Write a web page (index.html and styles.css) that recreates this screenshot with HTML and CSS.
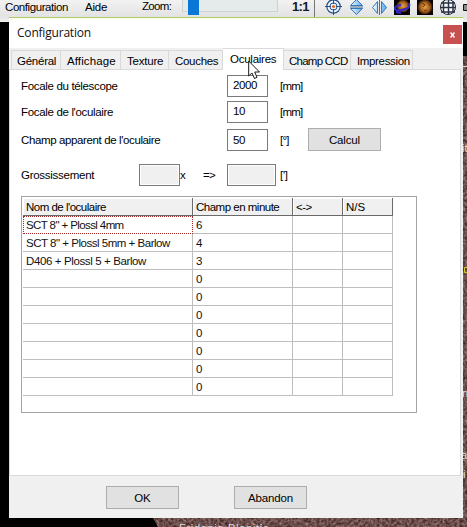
FILE: index.html
```html
<!DOCTYPE html>
<html lang="fr">
<head>
<meta charset="utf-8">
<title>Configuration</title>
<link rel="stylesheet" href="styles.css">
</head>
<body>
<div class="desktop">
  <svg class="surface" width="467" height="527" viewBox="0 0 467 527">
    <defs>
      <filter id="grain" x="0" y="0" width="100%" height="100%" color-interpolation-filters="sRGB">
        <feTurbulence type="fractalNoise" baseFrequency="0.35" numOctaves="3" seed="4"/>
        <feColorMatrix values="0.6 0 0 0 0.12  0.55 0 0 0 0.03  0.55 0 0 0 0.02  0 0 0 0 1"/>
      </filter>
      <clipPath id="planet"><path d="M153 518H467V527H158ZM463 56H467V527H463Z"/></clipPath>
    </defs>
    <rect width="467" height="527" fill="#000"/>
    <g clip-path="url(#planet)"><rect width="467" height="527" filter="url(#grain)"/></g>
    <path d="M463 66.500H467" stroke="#ddd"/>
    <g class="place">
      <text x="179" y="532" textLength="90">Fridonia Planitia</text>
      <text x="462" y="397">n</text><text x="461" y="459">a</text><text x="463" y="478">i</text><text x="462" y="152">it</text>
    </g>
    <path d="M467 267.500H464.500V272.500H467" fill="none" stroke="#d5c51c"/>
  </svg>

  <header class="toolbar">
    <span class="menu m-config">Configuration</span>
    <span class="menu m-help">Aide</span>
    <span class="menu m-zoom">Zoom:</span>
    <div class="track"><div class="thumb"></div></div>
    <span class="ratio">1:1</span>
    <svg class="tools" width="153" height="22" viewBox="314 0 153 22">
      <defs><linearGradient id="sky" x1="0" x2="1"><stop stop-color="#f3fbff"/><stop offset="1" stop-color="#5ba8e8"/></linearGradient>
      <radialGradient id="mars"><stop stop-color="#e5a044"/><stop offset=".65" stop-color="#a35f1c"/><stop offset="1" stop-color="#2a1205"/></radialGradient></defs>
      <path d="M314.500 0V17" stroke="#777"/>
      <g fill="none" stroke="#294f88"><circle cx="333.500" cy="6.500" r="6.700" fill="#edf6ff" stroke-width="1.200"/><circle cx="333.500" cy="6.500" r="3.600"/><path d="M333.500-1V4M333.500 9V15M325 6.500H331M336 6.500H342"/></g>
      <circle cx="333.500" cy="6.500" r="1.600" fill="#e66a22"/>
      <g fill="url(#sky)" stroke="#3478c0"><path d="M350.500 5.500L356.500-.5L362.500 5.500ZM350.500 8.500L356.500 14.500L362.500 8.500Z"/><path d="M377.500 1.500L372.500 7.500L377.500 13.500ZM381.500 1.500L386.500 7.500L381.500 13.500Z"/></g>
      <path d="M350 7H363M379.500 0V15" stroke="#4b718f"/>
      <path d="M394 0H410V15H394ZM417 0H433V15H417Z" fill="#080303"/>
      <circle cx="403" cy="6" r="6.500" fill="url(#mars)"/><circle cx="425" cy="7" r="7.500" fill="url(#mars)"/>
      <path d="M422 3L425 5L423 7M428 3L430 6M424 11L427 10" stroke="#6d3509" fill="none"/>
      <path d="M409 3Q411 8 405 9Q398 12 395 9Q394 6 401 5M396 12L401 13" fill="none" stroke="#3029c4" stroke-width="2"/>
      <circle cx="448" cy="7" r="7.500" fill="#fff" stroke="#202634"/>
      <path d="M443.500 1V13M448.500-1V15M453 1V13M441 3H455M440 7.500H456M441 12H455" stroke="#293345" stroke-width="1.500"/>
      <path d="M467 4.500H463.500V10.500H467" fill="#888" stroke="#111"/>
    </svg>
  </header>

  <main class="dialog">
    <div class="titlebar"><h1>Configuration</h1><button class="close" aria-label="Fermer"><svg width="5" height="6" viewBox="0 0 5 6"><path d="M.5.500L4.500 5.500M4.500.500L.5 5.500" stroke="#fff" stroke-width="1.400"/></svg></button></div>
    <nav class="tabs">
      <span class="tab t1">Général</span><span class="tab t2">Affichage</span><span class="tab t3">Texture</span><span class="tab t4">Couches</span><span class="tab t5 active">Oculaires</span><span class="tab t6">Champ CCD</span><span class="tab t7">Impression</span>
    </nav>
    <section class="pane">
      <div class="row r1"><label>Focale du télescope</label><div class="field">2000</div><span class="unit">[mm]</span></div>
      <div class="row r2"><label>Focale de l'oculaire</label><div class="field">10</div><span class="unit">[mm]</span></div>
      <div class="row r3"><label class="wide">Champ apparent de l'oculaire</label><div class="field low">50</div><span class="unit">[°]</span><button class="btn calc">Calcul</button></div>
      <div class="row r4"><label class="short">Grossissement</label><div class="field off"></div><span class="times">x</span><span class="arrow">=&gt;</span><div class="field off big"></div><span class="minute">[']</span></div>
      <div class="frame">
        <div class="grid">
          <div class="th">Nom de l'oculaire</div><div class="th">Champ en minute</div><div class="th">&lt;-&gt;</div><div class="th ns">N/S</div>
          <div class="td focus"><span class="n1">SCT 8" + Plossl 4mm</span></div><div class="td">6</div><div class="td"></div><div class="td"></div>
          <div class="td"><span class="n2">SCT 8" + Plossl 5mm + Barlow</span></div><div class="td">4</div><div class="td"></div><div class="td"></div>
          <div class="td"><span class="n3">D406 + Plossl 5 + Barlow</span></div><div class="td">3</div><div class="td"></div><div class="td"></div>
          <div class="td"></div><div class="td">0</div><div class="td"></div><div class="td"></div>
          <div class="td"></div><div class="td">0</div><div class="td"></div><div class="td"></div>
          <div class="td"></div><div class="td">0</div><div class="td"></div><div class="td"></div>
          <div class="td"></div><div class="td">0</div><div class="td"></div><div class="td"></div>
          <div class="td"></div><div class="td">0</div><div class="td"></div><div class="td"></div>
          <div class="td"></div><div class="td">0</div><div class="td"></div><div class="td"></div>
          <div class="td"></div><div class="td">0</div><div class="td"></div><div class="td"></div>
        </div>
      </div>
    </section>
    <footer class="actions"><button class="btn">OK</button><button class="btn abandon">Abandon</button></footer>
  </main>
  <svg class="cursor" width="13" height="20" viewBox="0 0 13 20"><path d="M.7 1V16L4 13L6.500 18.500L9 17.300L6.700 12H11.500Z" fill="#fff" stroke="#18181c"/></svg>
</div>
</body>
</html>
```
FILE: styles.css
```css
* { box-sizing: border-box; }
body { margin: 0; font: 11.5px/14px "Liberation Sans", Arial, sans-serif; color: #000; }
.desktop { position: relative; width: 467px; height: 527px; overflow: hidden; }
.surface { position: absolute; inset: 0; }
.place { font-size: 11px; fill: #ddd; }

.toolbar { position: relative; display: flex; height: 22px; background: linear-gradient(#f2f2f2, #e3e3e3 16px, #f0f0f0); white-space: nowrap; }
.menu { flex: none; }
.m-config { width: 79px; padding-left: 5px; letter-spacing: -.42px; }
.m-help { width: 57px; padding-left: 6px; letter-spacing: -.2px; }
.m-zoom { width: 46px; padding-left: 6px; margin-top: -1px; letter-spacing: -.65px; }
.track { width: 96px; height: 12px; border: 1px solid #cdd3d5; border-top: 0; background: #e5eaea; }
.thumb { width: 11px; height: 15px; margin-left: 5px; background: #0877d6; }
.ratio { width: 36px; padding-left: 14px; font-weight: bold; font-size: 13px; color: #111a30; letter-spacing: -.7px; }
.tools { flex: none; }

.dialog { position: relative; display: flex; flex-direction: column; width: 454px; height: 501px; margin: -5px 0 0 9px; background: #f0f0f0; }
.titlebar { display: flex; justify-content: space-between; height: 31px; border-top: 1px solid #b2c969; background: linear-gradient(#fbffe5, #fff 2px); }
h1 { margin: 7px 0 0 8px; font: 12px/16px "Open Sans", sans-serif; letter-spacing: -.2px; color: #111; }
.close { display: flex; align-items: center; justify-content: center; width: 19px; height: 19px; margin: 7px 1px 0 0; padding: 0; border: 0; background: #c75050; }

.tabs { display: flex; align-items: flex-end; width: 452px; height: 22px; padding-left: 2px; white-space: nowrap; box-shadow: inset 0 -1px #d9d9d9; }
.tab { height: 20px; padding: 3px 0 0 6px; border: 1px solid #d9d9d9; border-left: 0; }
.t1 { width: 50px; padding-left: 5px; border-left: 1px solid #d9d9d9; letter-spacing: -.25px; }
.t2 { width: 60px; letter-spacing: .1px; }
.t3 { width: 48px; letter-spacing: -.2px; }
.t4 { width: 54px; letter-spacing: -.3px; }
.t5 { width: 61px; padding-left: 7px; letter-spacing: -.25px; }
.t6 { width: 67px; padding-left: 5px; letter-spacing: -.75px; }
.t7 { width: 62px; letter-spacing: -.35px; }
.active { height: 22px; border-bottom: 0; background: #fff; }

.pane { height: 406px; width: 452px; padding: 5px 0 0 11px; border: solid #d9d9d9; border-width: 0 1px 1px; background: #fff; }
.row { display: flex; align-items: center; height: 22px; white-space: nowrap; }
.r2 { margin-top: 4px; }
.r3 { margin-top: 6px; }
.r4 { margin-top: 13px; }
label { flex: none; width: 206px; letter-spacing: -.33px; }
.wide { letter-spacing: -.38px; }
.short { width: 118px; letter-spacing: -.27px; }
.field { flex: none; width: 41px; height: 22px; padding: 2px 0 0 5px; border: 1px solid #7a7a7a; background: #fff; letter-spacing: -.4px; }
.low { padding-top: 3px; }
.off { background: #f0f0f0; box-shadow: inset 0 0 0 1px #fff; }
.big { width: 49px; }
.unit { width: 40px; padding-left: 12px; letter-spacing: -.75px; }
.times { width: 23px; }
.arrow { width: 24px; letter-spacing: -.8px; }
.minute { padding-left: 4px; letter-spacing: -.3px; }
.btn { width: 73px; height: 23px; padding: 0; border: 1px solid #adadad; background: #e1e1e1; color: #000; font: inherit; letter-spacing: -.15px; }
.calc { margin-top: -1px; }

.frame { width: 396px; height: 217px; margin-top: 10px; padding: 1px; border: 1px solid #a5a5a5; }
.grid { display: grid; grid-template-columns: 170px 100px 50px 50px; grid-auto-rows: 18px; width: 370px; }
.th, .td { overflow: hidden; padding: 2px 0 0 3px; white-space: nowrap; border: solid #bdbdbd; border-width: 0 1px 1px 0; }
.th { border-color: #6a6a6a; background: #f0f0f0; box-shadow: inset 1px 1px #fff; letter-spacing: -.5px; }
.ns { letter-spacing: 0; }
.td { color: #111; }
.td.focus { padding: 1px 0 0 2px; border: 1px dotted #a52828; }
.n1 { letter-spacing: -.6px; }
.n2 { letter-spacing: -.48px; }
.n3 { letter-spacing: -.38px; }

.actions { display: flex; gap: 55px; padding: 10px 0 0 97px; }
.cursor { position: absolute; left: 248px; top: 60px; }
```
